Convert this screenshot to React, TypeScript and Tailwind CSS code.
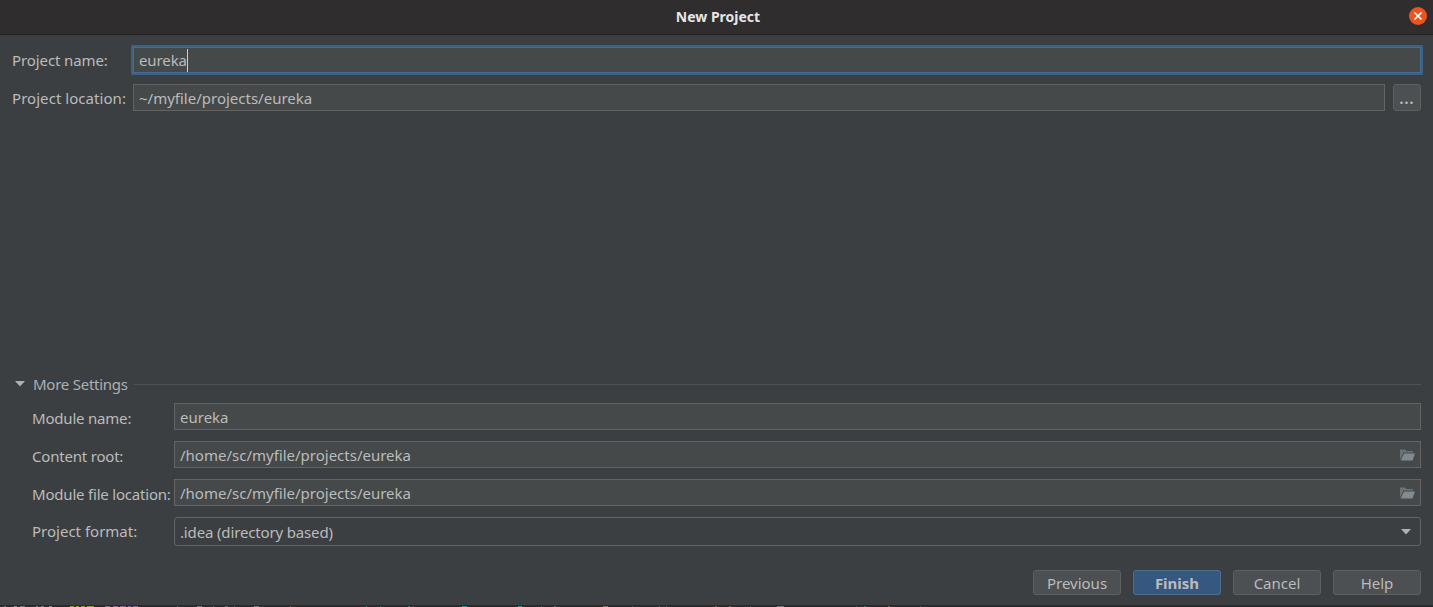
import React from "react";

function Folder() {
  return (
    <svg width="15" height="12" viewBox="0 0 15 12" className="shrink-0">
      <path d="M0 0.5H5L6.5 2H13V3.5H3.5L0 11Z" fill="#6e7274" />
      <path d="M4 4.5H15L12.5 11.5H0.8Z" fill="#7f8b91" />
    </svg>
  );
}

function Field({ value, right }: { value: string; right?: React.ReactNode }) {
  return (
    <div className="flex-1 h-[27px] border border-[#646464] bg-[#45494a] flex items-center pl-[5px] pr-[5px] justify-between">
      <span>{value}</span>
      {right}
    </div>
  );
}

function Row({ label, children, cls }: { label: string; children: React.ReactNode; cls: string }) {
  return (
    <div className={"flex items-center -ml-[12px] " + cls}>
      <div className="w-[174px] shrink-0 pl-[32px] whitespace-nowrap pt-[3px] tracking-[-0.2px]">{label}</div>
      {children}
    </div>
  );
}

function Btn({ label, primary }: { label: string; primary?: boolean }) {
  return (
    <div
      className={
        "w-[88px] h-[25px] rounded-[3px] border flex items-center justify-center " +
        (primary
          ? "bg-[#365880] border-[#4c708c] text-[#bbbbbb] font-bold"
          : "bg-[#4c5052] border-[#5e6060] text-[#bbbbbb]")
      }
    >
      {label}
    </div>
  );
}

const strip: [number, number, string][] = [
  [4, 2, "#777777"], [14, 3, "#888888"], [20, 5, "#777777"], [36, 2, "#888888"], [41, 3, "#777777"], [49, 3, "#888888"],
  [70, 4, "#8a9a30"], [76, 3, "#8a9a30"], [81, 4, "#8a9a30"], [87, 7, "#8a9a30"],
  [105, 5, "#7a6a90"], [113, 5, "#7a6a90"], [120, 6, "#7a6a90"], [128, 3, "#7a6a90"], [133, 5, "#7a6a90"],
  [177, 1, "#666666"], [197, 5, "#777777"], [213, 1, "#666666"], [225, 3, "#666666"], [234, 1, "#555555"],
  [254, 5, "#777777"], [262, 1, "#555555"], [290, 1, "#806050"], [366, 1, "#2f7f7f"], [380, 1, "#2f6f6f"],
  [408, 2, "#2f7f7f"], [413, 1, "#2f6f6f"], [462, 5, "#1f8f8f"], [518, 4, "#1f8f8f"], [541, 1, "#2f6f6f"], [554, 2, "#2f7f7f"],
  [603, 5, "#887766"], [632, 1, "#555555"], [659, 1, "#806050"], [666, 1, "#555555"], [715, 2, "#806050"], [729, 2, "#806050"],
  [750, 1, "#555555"], [777, 7, "#777777"], [856, 1, "#555555"], [888, 2, "#806050"], [864, 2, "#2f6f6f"], [920, 1, "#555555"],
];

export default function App() {
  return (
    <div className="w-[1433px] h-[607px] overflow-hidden flex flex-col bg-[#3c3f41] text-[#bbbbbb] text-[15px] leading-[20px] font-['Noto_Sans',sans-serif]">
      <div className="h-[35px] shrink-0 bg-[#2f2d2d] border-b border-[#222222] flex items-center relative">
        <div className="flex-1 text-center font-bold text-[14px] text-[#e6e6e6] pl-[3px]">New Project</div>
        <div className="absolute right-[6px] top-[7px] w-[18px] h-[18px] rounded-full bg-[#e95420] flex items-center justify-center">
          <svg width="10" height="10" viewBox="0 0 10 10">
            <path d="M1.5 1.5L8.5 8.5M8.5 1.5L1.5 8.5" stroke="#ffffff" strokeWidth="1.6" />
          </svg>
        </div>
      </div>

      <div className="flex-1 flex flex-col pl-[12px] pr-[12px] min-h-0">
        <div className="flex items-center mt-[12px] h-[26px]">
          <div className="w-[121px] shrink-0 pb-[1px] tracking-[-0.1px]">Project name:</div>
          <div className="flex-1 h-[26px] border border-[#466d94] outline-2 outline-[#3d6185] bg-[#45494a] flex items-center pl-[5px]">
            <span className="tracking-[-0.1px]">eureka</span>
            <span className="w-px h-[23px] bg-[#cccccc]"></span>
          </div>
        </div>
        <div className="flex items-center mt-[11px] h-[27px]">
          <div className="w-[121px] shrink-0 tracking-[0.05px]">Project location:</div>
          <Field value="~/myfile/projects/eureka" />
          <div className="w-[28px] h-[27px] ml-[8px] rounded-[3px] border border-[#5e6060] bg-[#4c5052] flex items-center justify-center text-[14px] font-bold tracking-[1px] pt-[2px]">...</div>
        </div>

        <div className="flex-1"></div>

        <div className="flex items-center h-[20px] -mt-px">
          <svg width="10" height="6" viewBox="0 0 10 6" className="ml-[3px] shrink-0">
            <path d="M0 0H10L5 5.5Z" fill="#b0b0b0" />
          </svg>
          <span className="ml-[8px] text-[#a9b0b5] tracking-[-0.25px]">More Settings</span>
          <div className="flex-1 h-px bg-[#515151] ml-[6px]"></div>
        </div>

        <Row label="Module name:" cls="mt-[9px]"><Field value="eureka" /></Row>
        <Row label="Content root:" cls="mt-[11px]"><Field value="/home/sc/myfile/projects/eureka" right={<Folder />} /></Row>
        <Row label="Module file location:" cls="mt-[11px]"><Field value="/home/sc/myfile/projects/eureka" right={<Folder />} /></Row>
        <div className="flex items-center -ml-[12px] mt-[11px]">
          <div className="w-[174px] shrink-0 pl-[32px] -mt-[2px]">Project format:</div>
          <div className="flex-1 h-[29px] rounded-[3px] border border-[#646464] bg-[#3c3f41] flex items-center justify-between pl-[5px] pr-[9px]">
            <span className="tracking-[-0.15px]">.idea (directory based)</span>
            <svg width="10" height="6" viewBox="0 0 10 6"><path d="M0 0H10L5 5.5Z" fill="#afb1b3" /></svg>
          </div>
        </div>

        <div className="flex justify-end gap-[12px] mt-[24px] mb-[10px]">
          <Btn label="Previous" />
          <Btn label="Finish" primary />
          <Btn label="Cancel" />
          <Btn label="Help" />
        </div>
      </div>

      <div className="h-[2px] shrink-0 bg-[#2b2b2b] relative overflow-hidden">
        {strip.map(([x, w, c], i) => (
          <span key={i} className="absolute bottom-0 h-[1px]" style={{ left: x, width: w, background: c }} />
        ))}
      </div>
    </div>
  );
}
